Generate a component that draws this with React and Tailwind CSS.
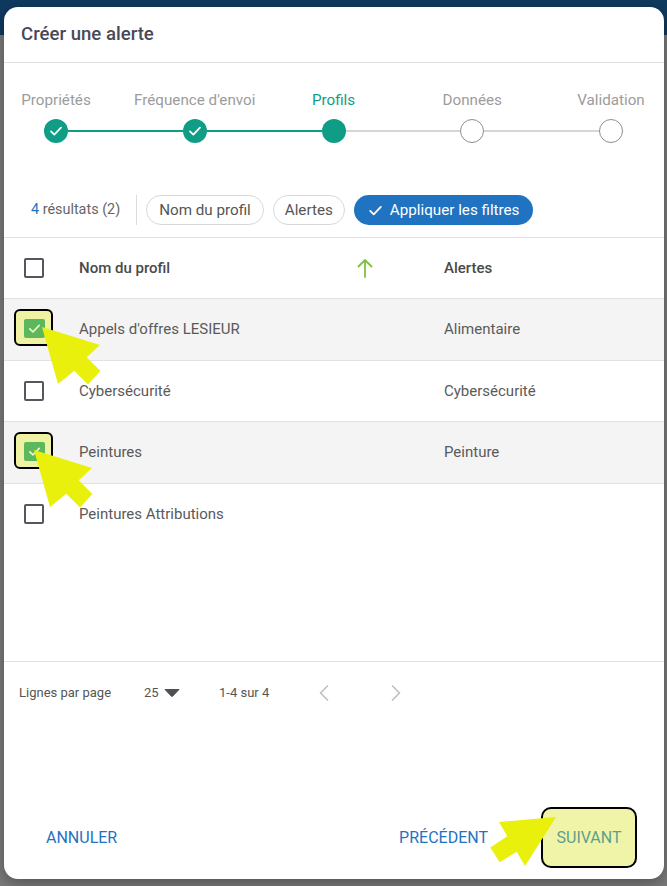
import React from "react";

const font = { fontFamily: "Roboto, 'Noto Sans', sans-serif" };

function Check({ className = "", size = 14 }) {
  return (
    <svg width={size} height={size} viewBox="0 0 24 24" fill="none" className={className}>
      <path d="M4.5 12.5l5 5L19.5 7" stroke="currentColor" strokeWidth="2.6" strokeLinecap="round" strokeLinejoin="round" />
    </svg>
  );
}

function StepCircle({ state }) {
  if (state === "done")
    return (
      <div className="w-[24px] h-[24px] rounded-full bg-[#0f9e85] flex items-center justify-center text-white shrink-0">
        <Check size={16} />
      </div>
    );
  if (state === "current") return <div className="w-[24px] h-[24px] rounded-full bg-[#0f9e85] shrink-0" />;
  return <div className="w-[24px] h-[24px] rounded-full bg-white border border-[#8f8f8f] shrink-0" />;
}

function Box({ checked }) {
  if (checked)
    return (
      <div className="relative w-[20px] h-[20px]">
        <div className="absolute left-[-10px] top-[-10px] w-[39px] h-[37px] rounded-[6px] border-2 border-black bg-[#eef2a2]" />
        <div className="relative w-[21px] h-[19px] rounded-[2px] bg-[#5cb85c] flex items-center justify-center text-[#f3f6c0]">
          <Check size={15} />
        </div>
      </div>
    );
  return <div className="w-[20px] h-[20px] rounded-[2px] border-2 border-[#55575f]" />;
}

const rows = [
  { name: "Appels d'offres LESIEUR", alert: "Alimentaire", checked: true },
  { name: "Cybersécurité", alert: "Cybersécurité", checked: false },
  { name: "Peintures", alert: "Peinture", checked: true },
  { name: "Peintures Attributions", alert: "", checked: false },
];

const steps = ["Propriétés", "Fréquence d'envoi", "Profils", "Données", "Validation"];

const arrow = "42,327 100,345 86.7,357.3 100.4,371 88,384.4 74.3,370.7 58,384";

export default function App() {
  return (
    <div className="relative w-[667px] h-[886px] overflow-hidden bg-[linear-gradient(#0f3a60_0_35px,#7b7b7b_35px)] pt-[7px] pl-[4px]" style={font}>
      <div className="w-[660px] h-[872px] rounded-[14px] bg-white shadow-[0_4px_16px_rgba(0,0,0,0.35)] flex flex-col">
        {/* header */}
        <div className="h-[56px] px-[17px] flex items-center border-b border-[#e2e2e2]">
          <h2 className="text-[18.6px] font-medium text-[#4a4a56]">Créer une alerte</h2>
        </div>

        {/* stepper */}
        <div className="pt-[27px] flex justify-between pl-[2px] pr-[3px]">
          {steps.map((s, i) => (
            <div key={s} className="w-[100px] flex flex-col items-center">
              <span className={"whitespace-nowrap text-[15.2px] leading-[20px] " + (i === 2 ? "text-[#0f9e85]" : "text-[#9c9c9c]")}>{s}</span>
            </div>
          ))}
        </div>
        <div className="mt-[9px] flex items-center pl-[40px] pr-[41px]">
          <StepCircle state="done" />
          <div className="flex-1 h-[2px] bg-[#0f9e85]" />
          <StepCircle state="done" />
          <div className="flex-1 h-[2px] bg-[#0f9e85]" />
          <StepCircle state="current" />
          <div className="flex-1 h-[2px] bg-[#d6d6d6]" />
          <StepCircle state="todo" />
          <div className="flex-1 h-[2px] bg-[#d6d6d6]" />
          <StepCircle state="todo" />
        </div>

        {/* filters */}
        <div className="mt-[52px] pb-[12px] border-b border-[#e2e2e2] flex items-center pl-[27px] h-[30px] box-content">
          <span className="text-[14.4px] text-[#666]"><span className="text-[#1f73c0]">4</span> résultats (2)</span>
          <div className="w-px h-[30px] bg-[#dcdcdc] ml-[16px] mr-[9px]" />
          <div className="flex items-center gap-[9px]">
            <span className="h-[30px] px-[12px] rounded-full border border-[#d8d8d8] flex items-center text-[15.2px] text-[#555]">Nom du profil</span>
            <span className="h-[30px] px-[11px] rounded-full border border-[#d8d8d8] flex items-center text-[15.2px] text-[#555]">Alertes</span>
            <span className="h-[30px] pl-[13px] pr-[14px] rounded-full bg-[#1f73c0] flex items-center gap-[6px] text-[15.2px] text-white">
              <Check size={17} />
              Appliquer les filtres
            </span>
          </div>
        </div>

        {/* table */}
        <div className="h-[423px]">
          <div className="h-[61px] flex items-center border-b border-[#e2e2e2] text-[15px] font-medium text-[#4a4a4a]">
            <div className="w-[75px] pl-[20px]"><Box checked={false} /></div>
            <div className="w-[278px]">Nom du profil</div>
            <div className="w-[87px]">
              <svg width="16" height="20" viewBox="0 0 16 20" fill="none">
                <path d="M8 19V2M1.5 8.5L8 2l6.5 6.5" stroke="#7cc242" strokeWidth="1.8" strokeLinecap="round" strokeLinejoin="round" />
              </svg>
            </div>
            <div>Alertes</div>
          </div>
          {rows.map((r, i) => (
            <div key={r.name} className={"h-[61.5px] flex items-center text-[15px] text-[#5a5a5a] " + (i < 3 ? "border-b border-[#e2e2e2] " : "") + (r.checked ? "bg-[#f4f4f4]" : "bg-white")}>
              <div className="w-[75px] pl-[20px]"><Box checked={r.checked} /></div>
              <div className="w-[365px]">{r.name}</div>
              <div>{r.alert}</div>
            </div>
          ))}
        </div>

        {/* pagination */}
        <div className="h-[62px] border-t border-[#e2e2e2] flex items-center pl-[15px] text-[13px] text-[#555]">
          <span className="w-[125px]">Lignes par page</span>
          <span className="flex items-center gap-[5px] w-[75px]">
            25
            <svg width="16" height="9" viewBox="0 0 16 9"><path d="M1 1.5h14L8.6 8.2a.9.9 0 0 1-1.2 0z" fill="#4f4f55" stroke="#4f4f55" strokeLinejoin="round" /></svg>
          </span>
          <span className="w-[98px]">1-4 sur 4</span>
          <div className="flex items-center gap-[58px]">
            <svg width="14" height="18" viewBox="0 0 14 18" fill="none"><path d="M11 1.5L3.5 9l7.5 7.5" stroke="#bdbdbd" strokeWidth="1.5" /></svg>
            <svg width="14" height="18" viewBox="0 0 14 18" fill="none"><path d="M3 1.5L10.5 9 3 16.5" stroke="#bdbdbd" strokeWidth="1.5" /></svg>
          </div>
        </div>

        {/* footer */}
        <div className="mt-auto flex items-center justify-between pl-[42px] pr-[27px] pb-[11px]">
          <button className="text-[16px] text-[#1f73c0] uppercase">Annuler</button>
          <div className="flex items-center">
            <button className="text-[16px] text-[#1f73c0] uppercase mr-[53px]">Précédent</button>
            <button className="w-[96px] h-[61px] rounded-[10px] border-2 border-black bg-[#f0f4a8] text-[16px] text-[#5f9f8b] uppercase">Suivant</button>
          </div>
        </div>
      </div>

      {/* annotation arrows */}
      <svg className="absolute left-0 top-0 pointer-events-none" width="667" height="886" viewBox="0 0 667 886">
        <polygon points={arrow} fill="#e8f00c" />
        <polygon points={arrow} fill="#e8f00c" transform="translate(-8 123)" />
        <polygon points="556,817 525,866 516.7,851.8 499.7,862.2 490.3,847.6 507.3,836.2 499,822" fill="#e8f00c" />
      </svg>
    </div>
  );
}
